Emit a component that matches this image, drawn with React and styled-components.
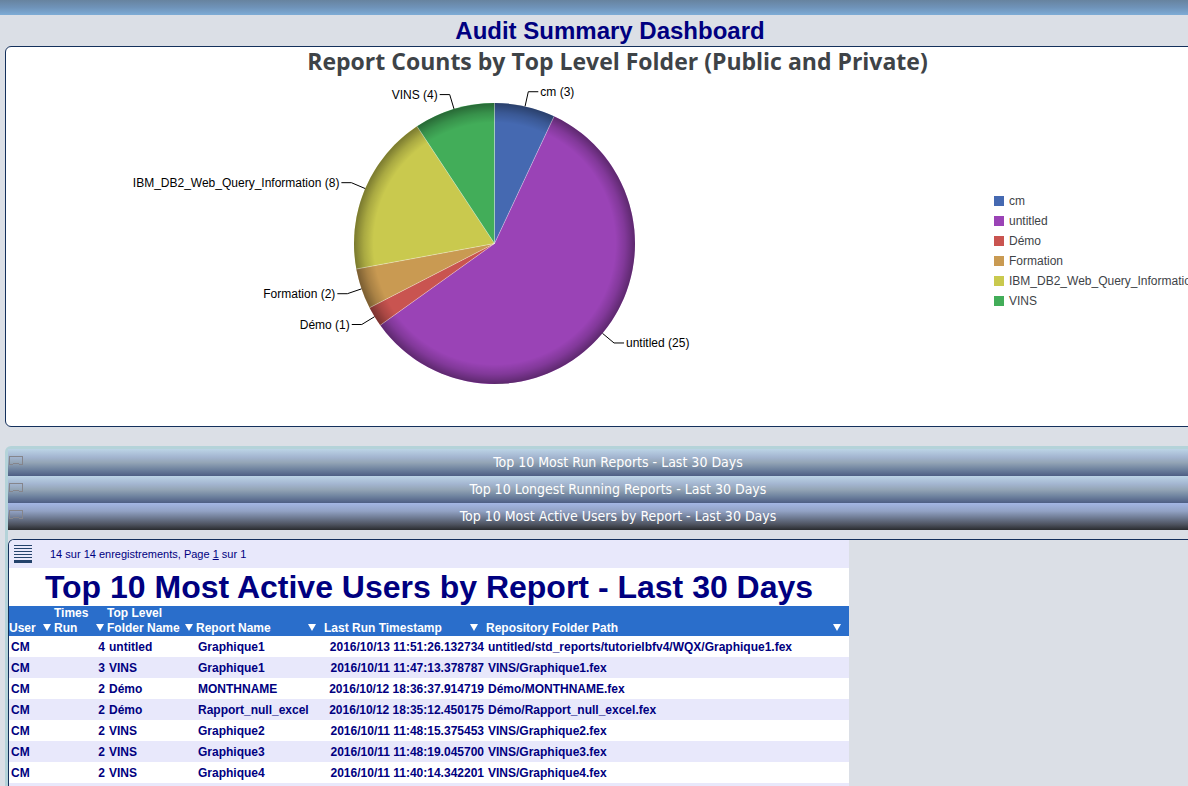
import { useState } from "react"
import styled, { createGlobalStyle, css } from "styled-components"

const GlobalStyle = createGlobalStyle`
  * {
    box-sizing: border-box;
  }
  body {
    margin: 0;
    background: #dbdfe6;
    font-family: "Liberation Sans", Arial, sans-serif;
    font-size: 12px;
    color: #000080;
  }
`
const Page = styled.div`
  display: flex;
  flex-direction: column;
  min-height: 100vh;
  overflow: hidden;
`
const TopBand = styled.div`
  height: 15px;
  background: linear-gradient(#67839f, #6f93b9 50%, #7eacd6);
`
const PageTitle = styled.h1`
  margin: 0 -32px 0 0;
  height: 31px;

  font-size: 24px;
  line-height: 32px;
  font-weight: bold;
  text-align: center;
`

/* the boards run past the right edge of the window */
const ChartPanel = styled.section`
  margin: 0 -42px 0 5px;
  border: 1px solid #14305c;
  border-radius: 6px;
  background: white;
`
const ChartTitle = styled.h2`
  margin: 0;

  font-family: "Open Sans", "Trebuchet MS", sans-serif;
  font-size: 23px;
  line-height: 29px;
  font-weight: bold;
  text-align: center;
  color: #3e4347;
`
const ChartContent = styled.div`
  display: flex;
  align-items: flex-start;
  height: 350px;
`
const PieArea = styled.div`
  flex: 1 1 auto;
  min-width: 0;

  svg {
    display: block;
    overflow: visible;
  }
  text {
    font-size: 12px;
    fill: #000000;
  }
`
const Legend = styled.ul`
  flex: 0 0 235px;
  margin: 0;
  padding: 115px 0 0;
  list-style: none;
`
const LegendItem = styled.li`
  display: flex;
  align-items: center;
  gap: 5px;
  height: 20px;

  color: #3e4347;
  white-space: nowrap;

  &::before {
    content: "";
    flex: 0 0 10px;
    height: 10px;
    background: ${({ $color }) => $color};
  }
`

const Accordion = styled.section`
  flex: 1 1 auto;
  display: flex;
  flex-direction: column;

  margin: 19px -44px 0 5px;
  border: 3px solid #b4d3d9;
  border-bottom: none;
  border-radius: 6px 6px 0 0;
`
const closedTab = css`
  background: linear-gradient(#bcd4e6, #a3b5d0 30%, #94a5b6 50%, #6f839f 75%, #4e5e84);
`
const openTab = css`
  background: linear-gradient(#a4b6e4, #92a2c4 30%, #6e7a92 55%, #4d525e 80%, #2a2c30);
`
const Tab = styled.button`
  display: flex;
  align-items: center;
  width: 100%;
  height: 27px;
  padding: 0 16px 1px 1px;

  border: none;
  ${({ $open }) => ($open ? openTab : closedTab)}
  font-family: "DejaVu Sans Condensed", Tahoma, sans-serif;
  font-size: 14px;
  color: white;

  cursor: pointer;

  svg {
    flex: 0 0 14px;
    margin-bottom: 3px;
  }
`
const TabLabel = styled.span`
  flex: 1 1 auto;
  text-align: center;
`

const ReportPanel = styled.div`
  flex: 1 1 auto;
  display: flex;
  flex-direction: column;
  align-items: flex-start;

  margin-top: 9px;
  border: 1px solid #14305c;
  border-bottom: none;
  border-radius: 6px 0 0 0;
  overflow: hidden;
`
const Toolbar = styled.div`
  display: flex;
  align-items: center;
  gap: 18px;
  width: 840px;
  height: 28px;
  padding: 0 5px;

  background: #e8e8fb;
  font-size: 11px;

  a {
    color: inherit;
  }
`
const ReportTitle = styled.h2`
  margin: 0;
  width: 840px;
  height: 38px;

  background: white;
  font-size: 32px;
  line-height: 38px;
  font-weight: bold;
  text-align: center;
`
const Table = styled.table`
  width: 840px;
  table-layout: fixed;
  border-collapse: collapse;
  font-weight: bold;
  white-space: nowrap;

  td {
    height: 21px;
    padding: 0 2px;
  }
  tbody tr {
    background: white;
  }
  tbody tr:nth-child(even) {
    background: #e8e8fb;
  }
`
const Column = styled.col`
  width: ${({ $width }) => $width}px;
`
const HeadCell = styled.th`
  height: 30px;
  padding: 0 ${({ $wide }) => ($wide ? 8 : 3)}px 0 0;
  vertical-align: bottom;

  background: #2a6ecb;
  line-height: 15px;
  text-align: left;
  white-space: pre;
  color: white;
`
const HeadContent = styled.div`
  display: flex;
  align-items: flex-end;
  justify-content: space-between;

  svg {
    flex: 0 0 8px;
    margin-bottom: 5px;
  }
`
const Cell = styled.td`
  text-align: ${({ $right }) => ($right ? "right" : "left")};
`
const Filler = styled.div`
  flex: 1 1 auto;
  width: 840px;
  background: #e8e8fb;
`

const folders = [
  { name: "cm", count: 3, color: "#4569b1" },
  { name: "untitled", count: 25, color: "#9a43b6" },
  { name: "Démo", count: 1, color: "#c95450" },
  { name: "Formation", count: 2, color: "#c99a52" },
  { name: "IBM_DB2_Web_Query_Information", count: 8, color: "#c9c94e" },
  { name: "VINS", count: 4, color: "#42ad59" },
]

const tabs = [
  "Top 10 Most Run Reports - Last 30 Days",
  "Top 10 Longest Running Reports - Last 30 Days",
  "Top 10 Most Active Users by Report - Last 30 Days",
]

const columns = [
  { label: "User", width: 45 },
  { label: "Times\nRun", width: 53, right: true },
  { label: "Top Level\nFolder Name", width: 89 },
  { label: "Report Name", width: 128, wide: true },
  { label: "Last Run Timestamp", width: 162, right: true, wide: true },
  { label: "Repository Folder Path", width: 363, wide: true },
]

const rows = [
  ["CM", "4", "untitled", "Graphique1", "2016/10/13 11:51:26.132734", "untitled/std_reports/tutorielbfv4/WQX/Graphique1.fex"],
  ["CM", "3", "VINS", "Graphique1", "2016/10/11 11:47:13.378787", "VINS/Graphique1.fex"],
  ["CM", "2", "Démo", "MONTHNAME", "2016/10/12 18:36:37.914719", "Démo/MONTHNAME.fex"],
  ["CM", "2", "Démo", "Rapport_null_excel", "2016/10/12 18:35:12.450175", "Démo/Rapport_null_excel.fex"],
  ["CM", "2", "VINS", "Graphique2", "2016/10/11 11:48:15.375453", "VINS/Graphique2.fex"],
  ["CM", "2", "VINS", "Graphique3", "2016/10/11 11:48:19.045700", "VINS/Graphique3.fex"],
  ["CM", "2", "VINS", "Graphique4", "2016/10/11 11:40:14.342201", "VINS/Graphique4.fex"],
]

const RADIUS = 140.5

const pointAt = (turn, radius) => {
  const angle = turn * 2 * Math.PI
  return [Math.sin(angle) * radius, -Math.cos(angle) * radius]
}

const PieChart = () => {
  const total = folders.reduce((sum, { count }) => sum + count, 0)
  let start = 0

  const slices = folders.map((folder) => {
    const from = start / total
    const to = (start + folder.count) / total
    start += folder.count
    return { ...folder, from, to, middle: (from + to) / 2 }
  })

  return (
    <svg width='800' height='350' role='img' aria-label='Report counts'>
      <defs>
        <radialGradient id='bevel' gradientUnits='userSpaceOnUse' cx='0' cy='0' r={RADIUS}>
          <stop offset='0.86' stopColor='#000000' stopOpacity='0' />
          <stop offset='0.93' stopColor='#000000' stopOpacity='0.16' />
          <stop offset='1' stopColor='#000000' stopOpacity='0.4' />
        </radialGradient>
      </defs>
      <g transform='translate(488.5 167.5)'>
        {slices.map(({ name, color, from, to }) => {
          const [x1, y1] = pointAt(from, RADIUS)
          const [x2, y2] = pointAt(to, RADIUS)
          const large = to - from > 0.5 ? 1 : 0
          return (
            <path
              key={name}
              d={`M0 0L${x1} ${y1}A${RADIUS} ${RADIUS} 0 ${large} 1 ${x2} ${y2}Z`}
              fill={color}
            />
          )
        })}
        <circle r={RADIUS} fill='url(#bevel)' />
        {slices.map(({ name, from }) => {
          const [x, y] = pointAt(from, RADIUS)
          return <path key={name} d={`M0 0L${x} ${y}`} stroke='#ffffff' strokeOpacity='0.35' />
        })}
        {slices.map(({ name, count, middle }) => {
          const side = middle < 0.5 ? 1 : -1
          const [x1, y1] = pointAt(middle, RADIUS)
          const [x2, y2] = pointAt(middle, RADIUS + 15)
          return (
            <g key={name}>
              <path d={`M${x1} ${y1}L${x2} ${y2}h${side * 10}`} fill='none' stroke='#000000' />
              <text x={x2 + side * 12} y={y2 + 4} textAnchor={side > 0 ? "start" : "end"}>
                {name} ({count})
              </text>
            </g>
          )
        })}
      </g>
    </svg>
  )
}

const TabIcon = () => (
  <svg width='14' height='10' shapeRendering='crispEdges' aria-hidden='true'>
    <path d='M0.5 8.5V0.5H13.5V8.5M1 8.5H4M10 8.5H13M4 7.5H10' fill='none' stroke='#85858c' />
  </svg>
)

const MenuIcon = () => (
  <svg width='18' height='18' shapeRendering='crispEdges' aria-hidden='true'>
    <path d='M0 0.5H18M0 3.5H18M0 6.5H18M0 9.5H18M0 12.5H18' stroke='#24436b' />
    <path d='M0 15H18V18H0Z' fill='#24436b' />
  </svg>
)

const SortArrow = () => (
  <svg width='8' height='7' aria-hidden='true'>
    <path d='M0 0H8L4 7Z' fill='#ffffff' />
  </svg>
)

export default function App() {
  const [openIndex, setOpenIndex] = useState(2)

  return (
    <>
      <GlobalStyle />
      <Page>
        <TopBand />
        <PageTitle>Audit Summary Dashboard</PageTitle>

        <ChartPanel>
          <ChartTitle>Report Counts by Top Level Folder (Public and Private)</ChartTitle>
          <ChartContent>
            <PieArea>
              <PieChart />
            </PieArea>
            <Legend>
              {folders.map(({ name, color }) => (
                <LegendItem key={name} $color={color}>
                  {name}
                </LegendItem>
              ))}
            </Legend>
          </ChartContent>
        </ChartPanel>

        <Accordion>
          {tabs.map((label, index) => (
            <Tab
              key={label}
              type='button'
              $open={index === openIndex}
              aria-expanded={index === openIndex}
              onClick={() => setOpenIndex(index)}
            >
              <TabIcon />
              <TabLabel>{label}</TabLabel>
            </Tab>
          ))}

          <ReportPanel>
            <Toolbar>
              <MenuIcon />
              <span>
                14 sur 14 enregistrements, Page <a href='#page-1'>1</a> sur 1
              </span>
            </Toolbar>
            <ReportTitle>{tabs[openIndex]}</ReportTitle>
            <Table>
              <colgroup>
                {columns.map(({ label, width }) => (
                  <Column key={label} $width={width} />
                ))}
              </colgroup>
              <thead>
                <tr>
                  {columns.map(({ label, wide }) => (
                    <HeadCell key={label} $wide={wide}>
                      <HeadContent>
                        {label}
                        <SortArrow />
                      </HeadContent>
                    </HeadCell>
                  ))}
                </tr>
              </thead>
              <tbody>
                {rows.map((row) => (
                  <tr key={row[4]}>
                    {row.map((value, index) => (
                      <Cell key={columns[index].label} $right={columns[index].right}>
                        {value}
                      </Cell>
                    ))}
                  </tr>
                ))}
              </tbody>
            </Table>
            <Filler />
          </ReportPanel>
        </Accordion>
      </Page>
    </>
  )
}
